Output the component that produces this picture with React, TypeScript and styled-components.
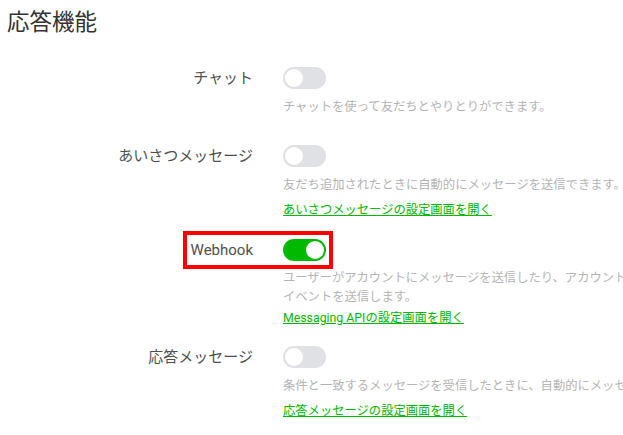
import styled, { createGlobalStyle } from "styled-components";

const GlobalStyle = createGlobalStyle`
	html, body {
		margin: 0;
		padding: 0;
		background: #ffffff;
		overflow: hidden;
	}
	body {
		font-family: Roboto, "Noto Sans CJK JP", sans-serif;
		color: #333333;
	}
`;

type Feature = {
	label: string;
	on: boolean;
	description: string[];
	link?: string;
	highlight?: boolean;
};

const features: Feature[] = [
	{
		label: "チャット",
		on: false,
		description: ["チャットを使って友だちとやりとりができます。"],
	},
	{
		label: "あいさつメッセージ",
		on: false,
		description: ["友だち追加されたときに自動的にメッセージを送信できます。"],
		link: "あいさつメッセージの設定画面を開く",
	},
	{
		label: "Webhook",
		on: true,
		highlight: true,
		description: [
			"ユーザーがアカウントにメッセージを送信したり、アカウントを友だち追加したりしたときに、Webhook URLに",
			"イベントを送信します。",
		],
		link: "Messaging APIの設定画面を開く",
	},
	{
		label: "応答メッセージ",
		on: false,
		description: ["条件と一致するメッセージを受信したときに、自動的にメッセージを返信します。"],
		link: "応答メッセージの設定画面を開く",
	},
];

const App = () => {
	return (
		<>
			<GlobalStyle />
			<Page>
				<Title>応答機能</Title>
				<List>
					{features.map((f) => (
						<Row key={f.label}>
							{f.highlight && <Highlight />}
							<Label>{f.label}</Label>
							<Content>
								<Toggle $on={f.on}>
									<Knob $on={f.on} />
								</Toggle>
								<Description $lines={f.description.length}>
									{f.description.map((line) => (
										<Line key={line}>{line}</Line>
									))}
								</Description>
								{f.link && <SettingsLink href="#">{f.link}</SettingsLink>}
							</Content>
						</Row>
					))}
				</List>
			</Page>
		</>
	);
};

const Page = styled.div`
	padding: 8px 0 0 7px;
	width: 900px;
`;

const Title = styled.h1`
	margin: 0;
	font-size: 22.5px;
	font-weight: 400;
	line-height: 28px;
	color: #333333;
`;

const List = styled.div`
	display: flex;
	flex-direction: column;
	gap: 18px;
	margin-top: 31px;
`;

const Row = styled.div`
	position: relative;
	display: grid;
	grid-template-columns: 246px 1fr;
	column-gap: 30px;
	&:first-child {
		margin-bottom: 6px;
	}
	&:nth-child(2) {
		margin-bottom: 1px;
	}
`;

const Highlight = styled.div`
	position: absolute;
	left: 176px;
	top: -8px;
	width: 150px;
	height: 38px;
	box-sizing: border-box;
	border: 4px solid #ff0000;
	pointer-events: none;
`;

const Label = styled.div`
	text-align: right;
	font-size: 15px;
	line-height: 22px;
	color: #505050;
`;

const Content = styled.div`
	display: flex;
	flex-direction: column;
	align-items: flex-start;
`;

const Toggle = styled.div<{ $on: boolean }>`
	position: relative;
	width: 43px;
	height: 22px;
	border-radius: 11px;
	background: ${(p) => (p.$on ? "#00b900" : "#dfe1e5")};
`;

const Knob = styled.div<{ $on: boolean }>`
	position: absolute;
	top: 2px;
	left: ${(p) => (p.$on ? "23px" : "2px")};
	width: 18px;
	height: 18px;
	border-radius: 50%;
	background: #ffffff;
`;

const Description = styled.div<{ $lines: number }>`
	margin-top: ${(p) => (p.$lines > 1 ? "8px" : "9px")};
	min-height: 23px;
	font-size: 12.3px;
	line-height: 19px;
	color: #b5b5b5;
	white-space: nowrap;
`;

const Line = styled.div``;

const SettingsLink = styled.a`
	margin-top: 2px;
	font-size: 12.3px;
	line-height: 19px;
	color: #00b900;
	text-decoration: underline;
`;

export default App;
